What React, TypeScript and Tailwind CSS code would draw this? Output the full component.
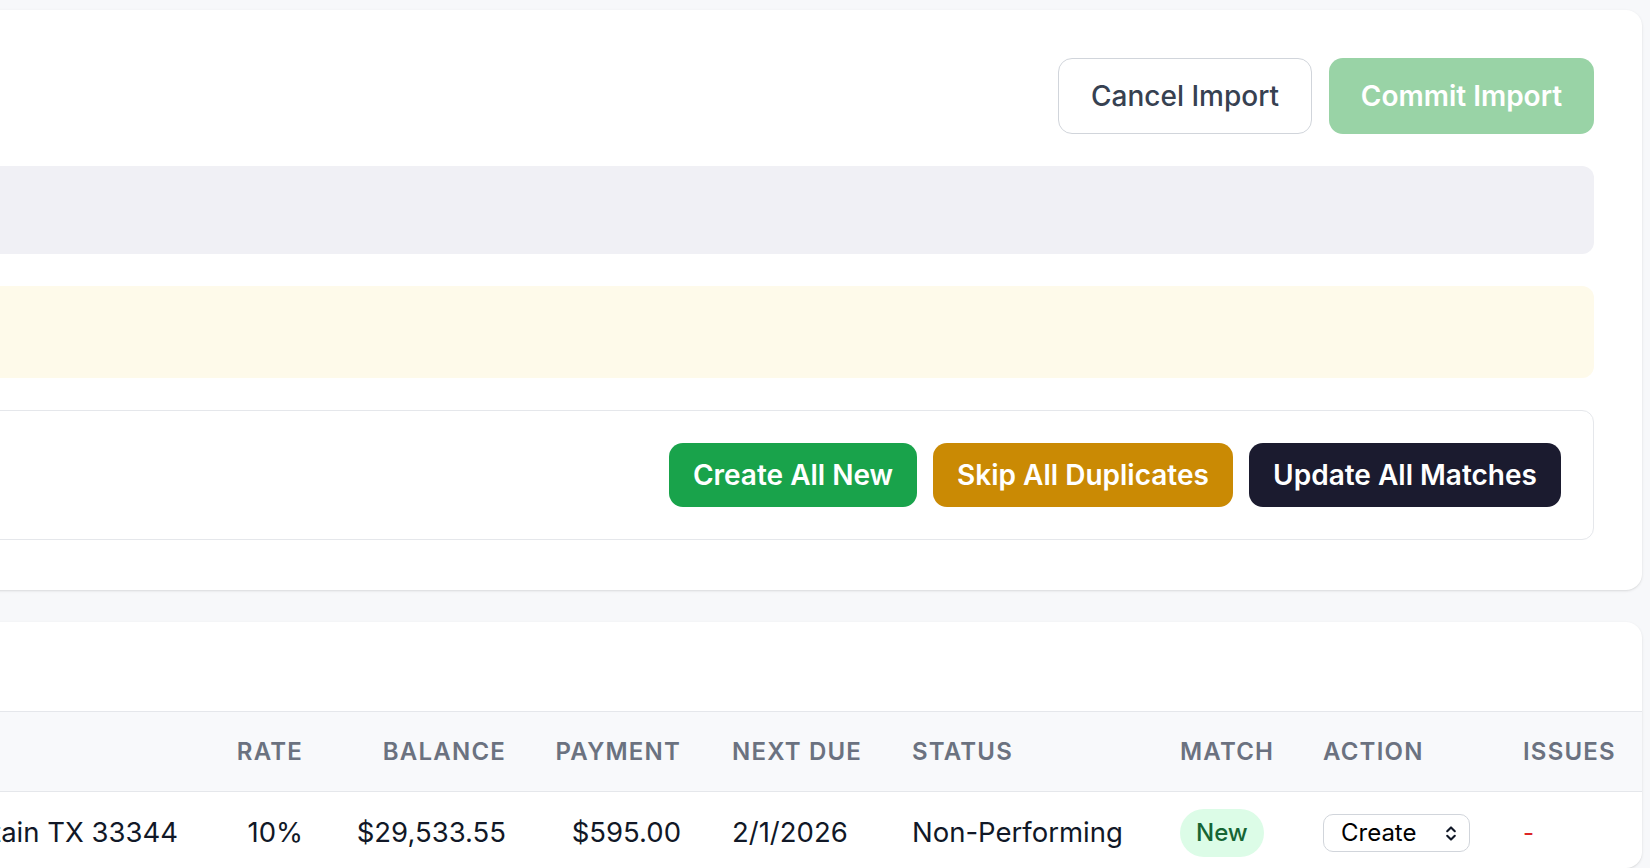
const rows = [
    {
        borrower: 'Maria Gonzales',
        address: '4521 Oak Ridge Dr, Fountain TX 33344',
        rate: '10%',
        balance: '$29,533.55',
        payment: '$595.00',
        nextDue: '2/1/2026',
        status: 'Non-Performing',
        match: 'New',
        action: 'Create',
    },
];

const SelectChevrons = () => (
    <svg width="12" height="17" viewBox="0 0 12 17" fill="none" className="text-[#111827]">
        <path
            d="M2.2 6.2 L6 2.4 L9.8 6.2 M2.2 10.8 L6 14.6 L9.8 10.8"
            stroke="currentColor"
            strokeWidth="2.1"
            strokeLinecap="round"
            strokeLinejoin="round"
        />
    </svg>
);

const th = 'flex h-[81px] items-center border-y-[1.5px] border-[#e5e7eb] bg-[#f8f9fb] whitespace-nowrap';
const td = 'flex h-[82px] items-center whitespace-nowrap';

export default function App() {
    return (
        <div className="flex h-[868px] w-full justify-end overflow-hidden bg-[#f7f8fa] font-['Inter',sans-serif]">
            <div className="flex w-[2400px] shrink-0 flex-col gap-8 pt-[10px] pr-2">
                {/* import review panel */}
                <div className="flex flex-col gap-8 rounded-2xl bg-white px-12 pt-12 pb-[50px] shadow-sm">
                    <div className="flex items-center justify-end gap-[17px]">
                        <button className="flex h-[76px] w-[254px] items-center justify-center rounded-[14px] border-[1.5px] border-[#d1d5db] bg-white text-[28px] font-medium text-[#374151]">
                            Cancel Import
                        </button>
                        <button className="flex h-[76px] w-[265px] items-center justify-center rounded-[14px] bg-[#99d3a6] text-[28px] font-semibold text-white">
                            Commit Import
                        </button>
                    </div>

                    <div className="h-[88px] rounded-xl bg-[#f0f0f5]" />

                    <div className="h-[92px] rounded-xl bg-[#fefaea]" />

                    <div className="flex items-center justify-end gap-4 rounded-xl border-[1.5px] border-[#e5e7eb] p-8">
                        <button className="flex h-16 w-[248px] items-center justify-center rounded-[14px] bg-[#19a34b] text-[28px] font-semibold text-white">
                            Create All New
                        </button>
                        <button className="flex h-16 w-[300px] items-center justify-center rounded-[14px] bg-[#ca8a04] text-[28px] font-semibold text-white">
                            Skip All Duplicates
                        </button>
                        <button className="flex h-16 w-[312px] items-center justify-center rounded-[14px] bg-[#1b1b2f] text-[28px] font-semibold text-white">
                            Update All Matches
                        </button>
                    </div>
                </div>

                {/* loans table */}
                <div className="overflow-hidden rounded-2xl bg-white shadow-sm">
                    <div className="h-[89px]" />
                    <div className="grid grid-cols-[1fr_auto_125px_202px_175px_180px_268px_143px_200px_145px]">
                        <div className={`${th} px-[26px] text-[24px] font-semibold tracking-wider text-[#6b7280] uppercase`}>
                            Borrower
                        </div>
                        <div className={`${th} px-[26px] text-[24px] font-semibold tracking-wider text-[#6b7280] uppercase`}>
                            Address
                        </div>
                        <div className={`${th} justify-end pr-[26px] text-[24px] font-semibold tracking-wider text-[#6b7280] uppercase`}>
                            Rate
                        </div>
                        <div className={`${th} justify-end pr-[25px] text-[24px] font-semibold tracking-wider text-[#6b7280] uppercase`}>
                            Balance
                        </div>
                        <div className={`${th} justify-end pr-[25px] text-[24px] font-semibold tracking-wider text-[#6b7280] uppercase`}>
                            Payment
                        </div>
                        <div className={`${th} pl-[26px] text-[24px] font-semibold tracking-wider text-[#6b7280] uppercase`}>
                            Next Due
                        </div>
                        <div className={`${th} pl-[26px] text-[24px] font-semibold tracking-wider text-[#6b7280] uppercase`}>
                            Status
                        </div>
                        <div className={`${th} pl-[26px] text-[24px] font-semibold tracking-wider text-[#6b7280] uppercase`}>
                            Match
                        </div>
                        <div className={`${th} pl-[26px] text-[24px] font-semibold tracking-wider text-[#6b7280] uppercase`}>
                            Action
                        </div>
                        <div className={`${th} pl-[26px] text-[24px] font-semibold tracking-wider text-[#6b7280] uppercase`}>
                            Issues
                        </div>

                        {rows.map((row) => (
                            <div key={row.address} className="contents text-[27.5px] text-[#111827]">
                                <div className={`${td} px-[26px]`}>{row.borrower}</div>
                                <div className={`${td} px-[26px]`}>{row.address}</div>
                                <div className={`${td} justify-end pr-[26px]`}>{row.rate}</div>
                                <div className={`${td} justify-end pr-[25px]`}>{row.balance}</div>
                                <div className={`${td} justify-end pr-[25px]`}>{row.payment}</div>
                                <div className={`${td} pl-[26px]`}>{row.nextDue}</div>
                                <div className={`${td} pl-[26px]`}>{row.status}</div>
                                <div className={`${td} pl-[26px]`}>
                                    <span className="inline-flex h-12 items-center rounded-full bg-[#dcfce7] px-4 text-[24px] font-medium text-[#166534]">
                                        {row.match}
                                    </span>
                                </div>
                                <div className={`${td} pl-[26px]`}>
                                    <div className="flex h-[38px] w-[147px] items-center justify-between rounded-[10px] border-[1.5px] border-[#d1d5db] bg-white pr-3 pl-[17px] text-[24px] text-black">
                                        <span>{row.action}</span>
                                        <SelectChevrons />
                                    </div>
                                </div>
                                <div className={`${td} pl-[26px] text-[24px] text-[#dc2626]`}>-</div>
                            </div>
                        ))}
                    </div>
                </div>
            </div>
        </div>
    );
}
